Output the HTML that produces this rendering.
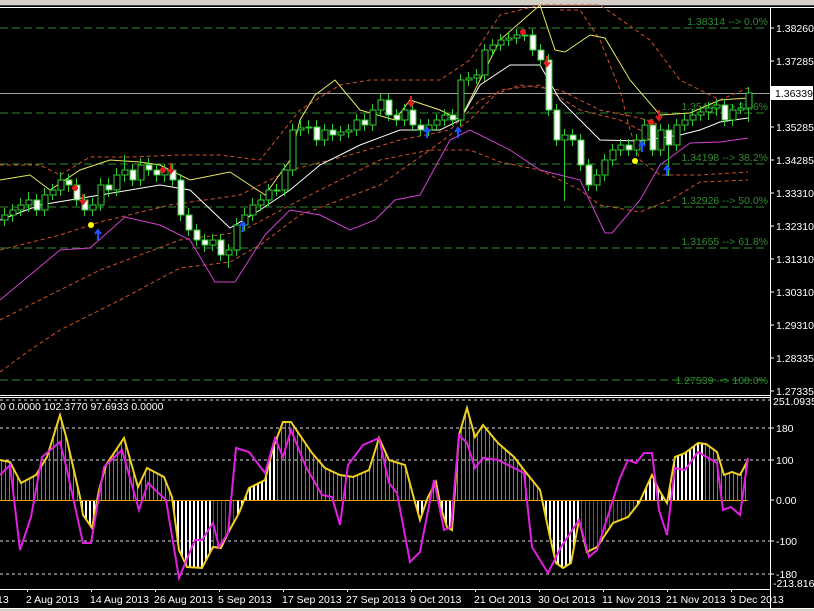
<!DOCTYPE html>
<html><head><meta charset="utf-8"><style>
html,body{margin:0;padding:0;background:#000;width:814px;height:611px;overflow:hidden}
svg{display:block;font-family:"Liberation Sans",sans-serif}
</style></head><body>
<svg width="814" height="611" viewBox="0 0 814 611" xmlns="http://www.w3.org/2000/svg">
<defs>
<pattern id="pg" width="4" height="10" patternUnits="userSpaceOnUse"><rect x="1" y="0" width="1" height="10" fill="#2fb32f"/></pattern>
<pattern id="pw" width="4" height="10" patternUnits="userSpaceOnUse"><rect x="1" y="0" width="2" height="10" fill="#fff"/></pattern>
<pattern id="pr" width="4" height="10" patternUnits="userSpaceOnUse"><rect x="1" y="0" width="1" height="10" fill="#c0300a"/></pattern>
<clipPath id="ha"><polygon points="0,500 0,460 10,462 21,483 36,475 47,457 60,415 67,440 80,497 83,515 92,528 99,490 106,465 124,438 138,487 147,468 164,477 172,497 179,550 187,567 202,568 213,547 221,548 228,533 239,513 249,488 265,480 273,448 283,422 291,422 312,453 325,468 340,475 353,477 369,470 379,438 389,460 405,465 413,495 420,520 428,497 436,482 441,508 447,527 452,530 459,435 467,408 475,437 483,425 498,443 514,457 524,470 540,490 550,537 556,563 563,568 571,563 579,520 587,552 597,547 613,523 628,517 639,503 652,475 659,490 667,503 675,457 685,453 698,443 706,444 717,452 724,475 732,472 740,475 748,460 748,500"/></clipPath>
</defs>
<rect width="814" height="611" fill="#000"/>
<rect x="0" y="0" width="814" height="5" fill="#d4d0c8"/>
<rect x="0" y="5" width="814" height="1" fill="#404040"/>
<rect x="0" y="7" width="814" height="1" fill="#fff"/>
<g stroke="#2f8a2f" stroke-width="1" stroke-dasharray="8,4" fill="none">
<path d="M0 28H768M0 113H768M0 164H768M0 207H768M0 248H768M0 380H768"/>
</g>
<path d="M0 93.5H770" stroke="#a0a0a0"/>
<g fill="#2e8b2e" font-size="10.5" text-anchor="end">
<text x="768" y="25">1.38314 --&gt; 0.0%</text>
<text x="768" y="110">1.35461 --&gt; 23.6%</text>
<text x="768" y="161">1.34198 --&gt; 38.2%</text>
<text x="768" y="204">1.32926 --&gt; 50.0%</text>
<text x="768" y="245">1.31655 --&gt; 61.8%</text>
<text x="768" y="384">1.27539 --&gt; 100.0%</text>
</g>
<g stroke="#d0502a" stroke-width="1" stroke-dasharray="4,3" fill="none">
<polyline points="0,165 40,165 60,175 90,157 130,157 180,155 220,155 260,160 300,110 340,85 370,80 400,80 440,80 470,60 500,15 540,5 600,5 650,40 680,80 720,100 748,88"/>
<polyline points="0,250 60,235 100,222 170,205 240,195 290,170 350,155 400,140 450,130 480,100 520,85 560,90 600,110 640,118 660,125"/>
<polyline points="0,320 40,300 100,270 180,240 240,232 300,200 380,160 430,150 470,120 500,90 540,85 580,110 620,120 650,135"/>
<polyline points="0,372 30,350 60,330 120,300 180,268 230,262 260,245 300,215 340,200 380,185 430,150 470,150 500,162 540,170 580,190 600,205 640,212 670,200 700,182 748,180"/>
<polyline points="560,10 580,10 600,40 620,90 630,130 640,160 660,175 700,175 748,172"/>
</g>
<polyline fill="none" stroke="#e8e860" stroke-width="1" points="0,180 30,175 50,190 80,170 110,160 140,162 160,165 190,180 230,172 265,195 290,160 300,120 315,95 335,80 360,110 395,120 410,100 440,110 460,120 480,80 500,40 540,5 555,50 565,52 590,35 605,38 630,80 660,115 690,113 720,100 748,98"/>
<polyline fill="none" stroke="#fff" stroke-width="1" points="0,220 40,205 100,195 160,185 190,190 230,228 260,210 290,190 320,165 360,145 400,130 440,130 460,120 480,85 510,65 540,65 560,100 600,140 640,141 660,138 680,135 700,130 720,122 748,118"/>
<polyline fill="none" stroke="#d040d0" stroke-width="1" points="0,300 60,250 90,248 125,217 160,225 190,240 215,282 235,282 265,235 290,210 320,215 350,230 375,220 395,200 420,195 450,140 470,130 510,150 540,170 580,180 605,233 612,233 640,200 660,165 690,143 720,142 748,138"/>
<path stroke="#3c3" stroke-width="1" fill="none" d="M4.5 208V226M12.5 204V222M20.5 198V216M28.5 192V212M36.5 194V216M44.5 188V216M52.5 184V200M60.5 172V196M68.5 174V192M76.5 178V206M84.5 194V216M92.5 198V216M100.5 178V211M108.5 178V197M116.5 168V196M124.5 155V182M132.5 164V186M140.5 158V186M148.5 158V176M156.5 164V182M164.5 164V182M172.5 164V186M180.5 174V221M188.5 208V236M196.5 224V246M204.5 234V252M212.5 234V251M220.5 234V261M228.5 244V268M236.5 218V256M244.5 208V231M252.5 198V221M260.5 194V211M268.5 184V206M276.5 184V196M284.5 164V196M292.5 124V176M300.5 120V136M308.5 120V134M316.5 120V146M324.5 124V146M332.5 124V141M340.5 126V141M348.5 124V138M356.5 114V136M364.5 114V131M372.5 104V131M380.5 94V116M388.5 94V121M396.5 109V126M404.5 104V126M412.5 104V131M420.5 119V136M428.5 119V136M436.5 114V131M444.5 109V126M452.5 109V126M460.5 74V126M468.5 72V86M476.5 69V84M484.5 44V81M492.5 39V56M500.5 34V51M508.5 32V46M516.5 29V44M524.5 29V41M532.5 29V56M540.5 44V66M548.5 54V116M556.5 104V146M564.5 129V201M572.5 129V146M580.5 134V171M588.5 159V191M596.5 169V191M604.5 154V181M612.5 144V166M620.5 139V156M628.5 139V156M636.5 134V156M644.5 119V146M652.5 119V156M660.5 124V156M668.5 124V176M676.5 119V151M684.5 114V131M692.5 109V126M700.5 106V121M708.5 102V120M716.5 99V116M724.5 99V126M732.5 104V126M740.5 102V114M748.5 87V122"/>
<g fill="#000" stroke="#3c3" stroke-width="1">
<rect x="2" y="215" width="6" height="5"/><rect x="10" y="210" width="6" height="5"/><rect x="18" y="205" width="6" height="5"/><rect x="26" y="200" width="6" height="5"/><rect x="42" y="195" width="6" height="15"/><rect x="50" y="190" width="6" height="5"/><rect x="58" y="180" width="6" height="10"/><rect x="90" y="205" width="6" height="5"/><rect x="98" y="185" width="6" height="20"/><rect x="114" y="175" width="6" height="15"/><rect x="122" y="170" width="6" height="5"/><rect x="138" y="165" width="6" height="15"/><rect x="162" y="170" width="6" height="5"/><rect x="210" y="240" width="6" height="5"/><rect x="226" y="250" width="6" height="5"/><rect x="234" y="225" width="6" height="25"/><rect x="242" y="215" width="6" height="10"/><rect x="250" y="205" width="6" height="10"/><rect x="258" y="200" width="6" height="5"/><rect x="266" y="190" width="6" height="10"/><rect x="274" y="190" width="6" height="1"/><rect x="282" y="170" width="6" height="20"/><rect x="290" y="130" width="6" height="40"/><rect x="298" y="128" width="6" height="2"/><rect x="306" y="127" width="6" height="1"/><rect x="322" y="130" width="6" height="10"/><rect x="338" y="132" width="6" height="3"/><rect x="346" y="130" width="6" height="2"/><rect x="354" y="120" width="6" height="10"/><rect x="370" y="110" width="6" height="15"/><rect x="378" y="100" width="6" height="10"/><rect x="402" y="110" width="6" height="10"/><rect x="426" y="125" width="6" height="5"/><rect x="434" y="120" width="6" height="5"/><rect x="442" y="115" width="6" height="5"/><rect x="458" y="80" width="6" height="40"/><rect x="466" y="78" width="6" height="2"/><rect x="474" y="75" width="6" height="3"/><rect x="482" y="50" width="6" height="25"/><rect x="490" y="45" width="6" height="5"/><rect x="498" y="40" width="6" height="5"/><rect x="506" y="38" width="6" height="2"/><rect x="514" y="35" width="6" height="3"/><rect x="522" y="35" width="6" height="1"/><rect x="562" y="135" width="6" height="5"/><rect x="594" y="175" width="6" height="10"/><rect x="602" y="160" width="6" height="15"/><rect x="610" y="150" width="6" height="10"/><rect x="618" y="145" width="6" height="5"/><rect x="634" y="140" width="6" height="10"/><rect x="642" y="125" width="6" height="15"/><rect x="658" y="130" width="6" height="20"/><rect x="674" y="125" width="6" height="20"/><rect x="682" y="120" width="6" height="5"/><rect x="690" y="115" width="6" height="5"/><rect x="698" y="112" width="6" height="3"/><rect x="706" y="108" width="6" height="4"/><rect x="714" y="105" width="6" height="3"/><rect x="730" y="110" width="6" height="10"/><rect x="738" y="108" width="6" height="2"/><rect x="746" y="93" width="6" height="15"/>
</g>
<g fill="#fff" stroke="#3c3" stroke-width="1">
<rect x="34" y="200" width="6" height="10"/><rect x="66" y="180" width="6" height="5"/><rect x="74" y="185" width="6" height="15"/><rect x="82" y="200" width="6" height="10"/><rect x="106" y="185" width="6" height="5"/><rect x="130" y="170" width="6" height="10"/><rect x="146" y="165" width="6" height="5"/><rect x="154" y="170" width="6" height="5"/><rect x="170" y="170" width="6" height="10"/><rect x="178" y="180" width="6" height="35"/><rect x="186" y="215" width="6" height="15"/><rect x="194" y="230" width="6" height="10"/><rect x="202" y="240" width="6" height="5"/><rect x="218" y="240" width="6" height="15"/><rect x="314" y="127" width="6" height="13"/><rect x="330" y="130" width="6" height="5"/><rect x="362" y="120" width="6" height="5"/><rect x="386" y="100" width="6" height="15"/><rect x="394" y="115" width="6" height="5"/><rect x="410" y="110" width="6" height="15"/><rect x="418" y="125" width="6" height="5"/><rect x="450" y="115" width="6" height="5"/><rect x="530" y="35" width="6" height="15"/><rect x="538" y="50" width="6" height="10"/><rect x="546" y="60" width="6" height="50"/><rect x="554" y="110" width="6" height="30"/><rect x="570" y="135" width="6" height="5"/><rect x="578" y="140" width="6" height="25"/><rect x="586" y="165" width="6" height="20"/><rect x="626" y="145" width="6" height="5"/><rect x="650" y="125" width="6" height="25"/><rect x="666" y="130" width="6" height="15"/><rect x="722" y="105" width="6" height="15"/>
</g>
<g fill="#e02020"><circle cx="75" cy="188" r="3"/><circle cx="163" cy="170" r="3"/><circle cx="523" cy="32" r="3"/><circle cx="651" cy="122" r="3"/></g>
<g stroke="#e02020" stroke-width="2" fill="none"><path d="M83 194V204M80 200L83 204L86 200M171 163V173M168 169L171 173L174 169M411 96V106M408 102L411 106L414 102M547 56V66M544 62L547 66L550 62M659 110V120M656 116L659 120L662 116"/></g>
<g stroke="#2050ff" stroke-width="2" fill="none"><path d="M98 240V230M95 234L98 230L101 234M243 232V222M240 226L243 222L246 226M427 138V128M424 132L427 128L430 132M458 138V128M455 132L458 128L461 132M642 152V142M639 146L642 142L645 146M667 176V166M664 170L667 166L670 170"/></g>
<g fill="#ffff00"><circle cx="91" cy="225" r="3"/><circle cx="635" cy="161" r="3"/></g>
<rect x="770" y="8" width="1" height="600" fill="#fff"/>
<g fill="#fff" font-size="10.5">
<g stroke="#fff"><path d="M770 28h4M770 61h4M770 127h4M770 160h4M770 193h4M770 226h4M770 259h4M770 292h4M770 325h4M770 358h4M770 391h4M770 428h4M770 460h4M770 500h4M770 541h4M770 574h4"/></g>
<text x="776" y="32">1.38260</text><text x="776" y="65">1.37285</text>
<text x="776" y="131">1.35285</text><text x="776" y="164">1.34285</text><text x="776" y="197">1.33310</text><text x="776" y="230">1.32310</text><text x="776" y="263">1.31310</text><text x="776" y="296">1.30310</text><text x="776" y="329">1.29310</text><text x="776" y="362">1.28335</text><text x="776" y="395">1.27335</text>
</g>
<rect x="771" y="86" width="42" height="14" fill="#fff"/>
<text x="775" y="97" font-size="10.5" fill="#000">1.36339</text>
<rect x="0" y="395" width="771" height="1" fill="#fff"/>
<rect x="0" y="397" width="771" height="1" fill="#fff"/>
<g stroke="#ddd" stroke-dasharray="3,3" fill="none"><path d="M0 400H770M0 428H770M0 460H770M0 541H770M0 574H770"/></g>
<g clip-path="url(#ha)">
<rect x="0" y="400" width="770" height="190" fill="url(#pg)"/>
<rect x="0" y="501" width="770" height="90" fill="url(#pw)"/>
<rect x="213" y="501" width="24" height="90" fill="#000"/><rect x="213" y="501" width="24" height="90" fill="url(#pr)"/>
<rect x="580" y="501" width="55" height="90" fill="#000"/><rect x="580" y="501" width="55" height="90" fill="url(#pr)"/>
<rect x="240" y="400" width="36" height="100" fill="#000"/><rect x="240" y="400" width="36" height="100" fill="url(#pw)"/>
<rect x="645" y="400" width="60" height="100" fill="#000"/><rect x="645" y="400" width="60" height="100" fill="url(#pw)"/>
</g>
<path d="M0 500.5H748" stroke="#f0a000"/>
<polyline fill="none" stroke="#f0d020" stroke-width="2" points="0,460 10,462 21,483 36,475 47,457 60,415 67,440 80,497 83,515 92,528 99,490 106,465 124,438 138,487 147,468 164,477 172,497 179,550 187,567 202,568 213,547 221,548 228,533 239,513 249,488 265,480 273,448 283,422 291,422 312,453 325,468 340,475 353,477 369,470 379,438 389,460 405,465 413,495 420,520 428,497 436,482 441,508 447,527 452,530 459,435 467,408 475,437 483,425 498,443 514,457 524,470 540,490 550,537 556,563 563,568 571,563 579,520 587,552 597,547 613,523 628,517 639,503 652,475 659,490 667,503 675,457 685,453 698,443 706,444 717,452 724,475 732,472 740,475 748,460"/>
<polyline fill="none" stroke="#e020e0" stroke-width="2" points="0,475 10,465 20,550 31,517 42,457 60,442 67,470 83,543 91,543 104,467 122,450 139,510 148,483 166,500 179,578 195,540 202,540 213,523 219,547 228,533 236,448 249,452 265,473 275,438 283,457 291,430 306,467 322,495 332,497 340,525 348,465 363,445 379,438 389,483 397,493 410,562 420,552 434,480 444,530 451,527 459,435 467,443 475,468 483,458 498,460 514,468 524,473 532,547 548,573 561,547 579,520 589,557 597,550 620,478 628,460 636,463 644,453 652,453 659,510 667,535 675,468 685,470 698,452 717,463 723,510 731,507 740,515 748,458"/>
<g fill="#fff" font-size="10.5">
<text x="0" y="410">0 0.0000 102.3770 97.6933 0.0000</text>
<text x="773" y="405">251.0935</text>
<text x="776" y="432">180</text><text x="776" y="464">100</text><text x="776" y="504">0.00</text><text x="776" y="545">-100</text><text x="776" y="578">-180</text>
<text x="773" y="587">-213.8168</text>
</g>
<rect x="0" y="589" width="771" height="1" fill="#fff"/>
<g stroke="#fff"><path d="M27.5 589v3M91.5 589v3M155.5 589v3M219.5 589v3M283.5 589v3M347.5 589v3M411.5 589v3M475.5 589v3M539.5 589v3M603.5 589v3M667.5 589v3M731.5 589v3"/></g>
<g fill="#fff" font-size="10.5">
<text x="-3" y="603">13</text><text x="26" y="603">2 Aug 2013</text><text x="90" y="603">14 Aug 2013</text><text x="154" y="603">26 Aug 2013</text><text x="218" y="603">5 Sep 2013</text><text x="282" y="603">17 Sep 2013</text><text x="346" y="603">27 Sep 2013</text><text x="410" y="603">9 Oct 2013</text><text x="474" y="603">21 Oct 2013</text><text x="538" y="603">30 Oct 2013</text><text x="602" y="603">11 Nov 2013</text><text x="666" y="603">21 Nov 2013</text><text x="730" y="603">3 Dec 2013</text>
</g>
<rect x="0" y="608" width="814" height="1" fill="#fff"/>
<rect x="0" y="609" width="814" height="2" fill="#d4d0c8"/>
</svg>
</body></html>
